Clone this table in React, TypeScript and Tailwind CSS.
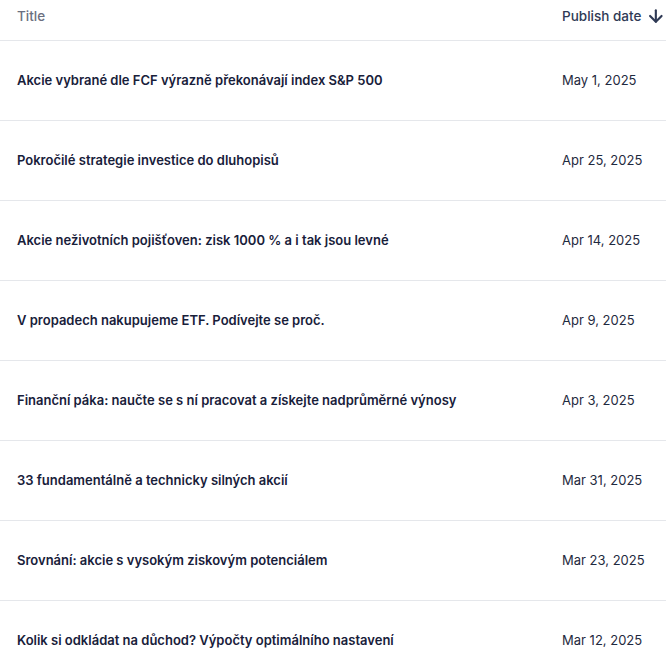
import React from 'react';
import { ArrowDown } from 'lucide-react';

const articles = [
  { title: 'Akcie vybrané dle FCF výrazně překonávají index S&P 500', date: 'May 1, 2025' },
  { title: 'Pokročilé strategie investice do dluhopisů', date: 'Apr 25, 2025' },
  { title: 'Akcie neživotních pojišťoven: zisk 1000 % a i tak jsou levné', date: 'Apr 14, 2025' },
  { title: 'V propadech nakupujeme ETF. Podívejte se proč.', date: 'Apr 9, 2025' },
  { title: 'Finanční páka: naučte se s ní pracovat a získejte nadprůměrné výnosy', date: 'Apr 3, 2025' },
  { title: '33 fundamentálně a technicky silných akcií', date: 'Mar 31, 2025' },
  { title: 'Srovnání: akcie s vysokým ziskovým potenciálem', date: 'Mar 23, 2025' },
  { title: 'Kolik si odkládat na důchod? Výpočty optimálního nastavení', date: 'Mar 12, 2025' },
];

export default function App() {
  return (
    <div className="min-h-screen bg-white font-['Inter',sans-serif] text-[13px]">
      <div className="flex h-[41px] items-start border-b border-[#e5e7eb] pt-[6px] text-[13.5px]">
        <div className="flex-1 pl-[17px] leading-5 font-medium text-[#6b7080]">Title</div>
        <div className="flex w-[104px] items-center gap-[5px] whitespace-nowrap leading-5 font-medium text-[#2f3a55]">
          Publish date
          <ArrowDown className="h-5 w-5 text-[#2f3a55]" strokeWidth={2.6} />
        </div>
      </div>
      {articles.map((a) => (
        <div key={a.title} className="flex h-20 items-center border-b border-[#e5e7eb]">
          <div className="flex-1 pl-[17px] font-semibold text-[#18203a]">{a.title}</div>
          <div className="w-[104px] text-[#1f2a40]">{a.date}</div>
        </div>
      ))}
    </div>
  );
}
